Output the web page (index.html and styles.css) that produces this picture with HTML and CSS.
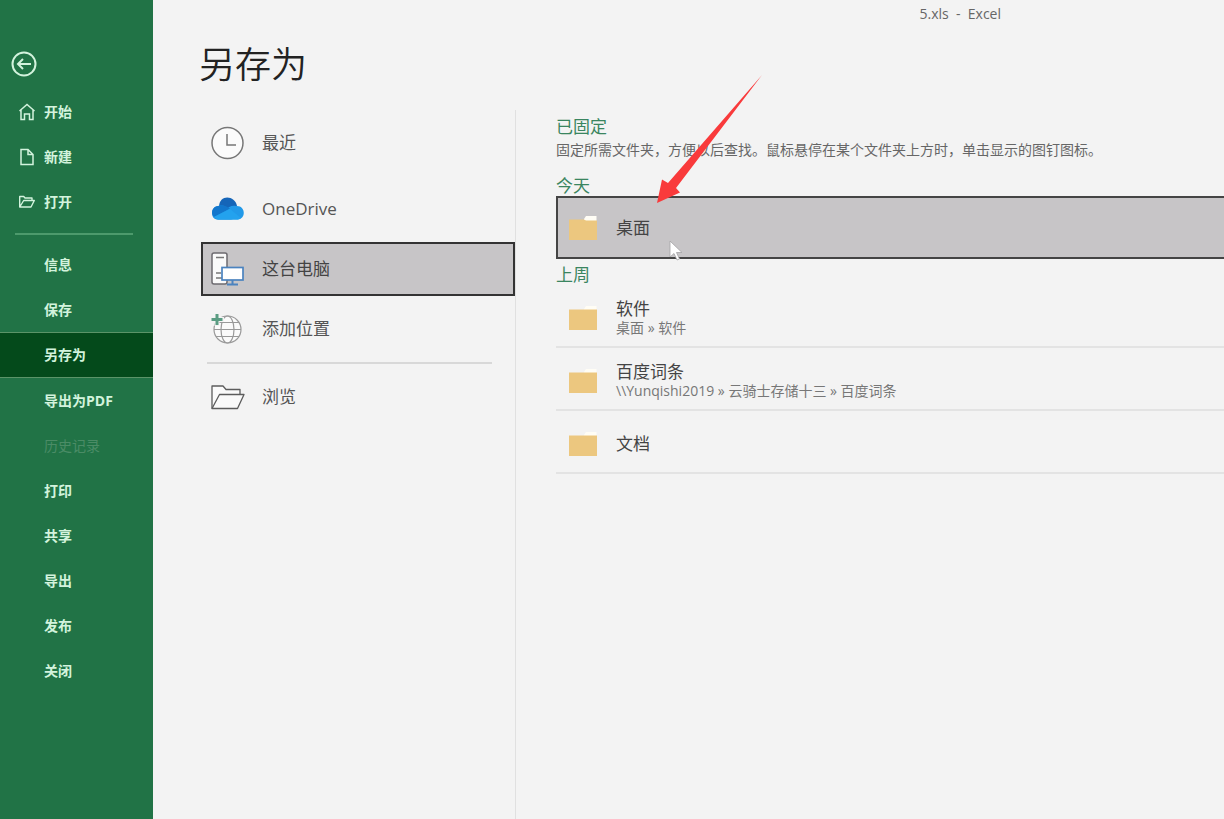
FILE: index.html
```html
<!DOCTYPE html>
<html lang="zh-CN">
<head>
<meta charset="utf-8">
<meta name="viewport" content="width=device-width, initial-scale=1">
<title>5.xls - Excel</title>
<link rel="stylesheet" href="styles.css">
</head>
<body>
<div class="app">
  <nav class="sidebar" aria-label="文件">
    <button class="back" type="button" aria-label="返回">
      <svg width="26" height="26" viewBox="0 0 26 26" fill="none" stroke="currentColor" stroke-width="2"><circle cx="13" cy="13" r="11.5"/><path d="M20 13H7M12 8l-5 5 5 5"/></svg>
    </button>
    <button class="nav-item" type="button">
      <svg class="nav-icon" width="16" height="18" viewBox="0 0 16 18" fill="none" stroke="currentColor" stroke-width="1.5"><path d="M.5 8L8 1.500 15.500 8M2 7v9.500h3.500V11h5v5.500H14V7"/></svg>开始
    </button>
    <button class="nav-item" type="button">
      <svg class="nav-icon" width="16" height="18" viewBox="0 0 16 18" fill="none" stroke="currentColor" stroke-width="1.500"><path d="M2 1.500h7l5 5v10H2zM9 1.500v5h5"/></svg>新建
    </button>
    <button class="nav-item" type="button">
      <svg class="nav-icon" width="16" height="18" viewBox="0 0 16 18" fill="none" stroke="currentColor" stroke-width="1.400" stroke-linejoin="round"><path d="M.7 14V3.500h4L6 5h7v2.500M.7 14l4-6.500h10.600l-3.300 6.500z"/></svg>打开
    </button>
    <hr class="nav-rule">
    <button class="nav-item" type="button">信息</button>
    <button class="nav-item" type="button">保存</button>
    <button class="nav-item current" type="button" aria-current="page">另存为</button>
    <button class="nav-item" type="button">导出为PDF</button>
    <button class="nav-item" type="button" disabled>历史记录</button>
    <button class="nav-item" type="button">打印</button>
    <button class="nav-item" type="button">共享</button>
    <button class="nav-item" type="button">导出</button>
    <button class="nav-item" type="button">发布</button>
    <button class="nav-item" type="button">关闭</button>
  </nav>

  <main class="main">
    <header class="titlebar">5.xls&nbsp; -&nbsp; Excel</header>
    <h1 class="page-title">另存为</h1>
    <div class="columns">
      <section class="places" aria-label="位置">
        <button class="place" type="button">
          <svg width="34" height="34" viewBox="0 0 34 34" fill="none"><circle cx="16.500" cy="17" r="15.500" fill="#fbfbfb" stroke="#777" stroke-width="1.500"/><path d="M16 8v11h9" stroke="#777" stroke-width="1.500"/></svg>最近
        </button>
        <button class="place" type="button">
          <svg width="34" height="34" viewBox="0 0 34 34"><path d="M8 15C8 2 24 3 26 14L16 22z" fill="#1565b8"/><path d="M7 27.500C-1 27-1 15 7 14c4-2 7 0 10 3l9 9-6 1.500z" fill="#1687d9"/><path d="M15 18c2-3 6-5 10-4 10-1 10 13 2 13.500H7c-3 0-5-2-5.500-4z" fill="#2199e8"/><path d="M8 14c3-2 7 0 11 2.500L3 25c-4-5-1-11 5-11z" fill="#1276cc"/><path d="M3 25l16-8 11 9-3 1.500H7z" fill="#23a2ee"/></svg>OneDrive
        </button>
        <button class="place selected" type="button" aria-pressed="true">
          <svg width="34" height="34" viewBox="0 0 34 34" fill="none"><rect x="1" y="1" width="15" height="31" rx="2" fill="#fafafa" stroke="#6d6b70" stroke-width="1.500"/><path d="M5 5.500h8M5 21h5M5 26h6" stroke="#777" stroke-width="1.500"/><rect x="11" y="15.500" width="21" height="12.500" fill="#fff" stroke="#4b83bf" stroke-width="1.700"/><path d="M21.500 28v4M16 32.500h11" stroke="#4b83bf" stroke-width="2"/></svg>这台电脑
        </button>
        <button class="place" type="button">
          <svg width="34" height="34" viewBox="0 0 34 34" fill="none"><g stroke="#999" stroke-width="1.200"><circle cx="16.500" cy="17.500" r="13.500" fill="#fafafa"/><ellipse cx="16.500" cy="17.500" rx="6.500" ry="13.500"/><path d="M5 10.500h23M3 17.500h27M5 24.500h23"/></g><path d="M6 1v13M0 7.500h13" stroke="#f3f3f3" stroke-width="5"/><path d="M6 2v11M.5 7.500h11" stroke="#5a9c82" stroke-width="3"/></svg>添加位置
        </button>
        <hr class="place-rule">
        <button class="place" type="button">
          <svg width="34" height="34" viewBox="0 0 34 34" fill="#fafafa" stroke="#5c5c5c" stroke-width="1.300" stroke-linejoin="round"><path d="M1 28.500V6h11l3 3.500h14V15"/><path d="M1 28.500L8.500 14.500H33l-6.500 14z"/></svg>浏览
        </button>
      </section>

      <section class="folders" aria-label="文件夹">
        <h2 class="group pinned">已固定</h2>
        <p class="hint">固定所需文件夹，方便以后查找。鼠标悬停在某个文件夹上方时，单击显示的图钉图标。</p>
        <h2 class="group today">今天</h2>
        <button class="folder selected" type="button" aria-pressed="true">
          <svg width="28" height="24" viewBox="0 0 28 24"><path d="M15 3l2-3h10.500v6H15z" fill="#fffdf5"/><path d="M0 3.500h15l2 1h11V24H0z" fill="#ecc77f"/></svg>
          <span class="folder-text"><span class="name">桌面</span></span>
        </button>
        <h2 class="group last-week">上周</h2>
        <button class="folder" type="button">
          <svg width="28" height="24" viewBox="0 0 28 24"><path d="M15 3l2-3h10.500v6H15z" fill="#fffdf5"/><path d="M0 3.500h28V24H0z" fill="#ecc77f"/></svg>
          <span class="folder-text"><span class="name">软件</span><span class="path">桌面 » 软件</span></span>
        </button>
        <button class="folder" type="button">
          <svg width="28" height="24" viewBox="0 0 28 24"><path d="M15 3l2-3h10.500v6H15z" fill="#fffdf5"/><path d="M0 3.500h28V24H0z" fill="#ecc77f"/></svg>
          <span class="folder-text"><span class="name">百度词条</span><span class="path">\\Yunqishi2019 » 云骑士存储十三 » 百度词条</span></span>
        </button>
        <button class="folder" type="button">
          <svg width="28" height="24" viewBox="0 0 28 24"><path d="M15 3l2-3h10.500v6H15z" fill="#fffdf5"/><path d="M0 3.500h28V24H0z" fill="#ecc77f"/></svg>
          <span class="folder-text"><span class="name">文档</span></span>
        </button>
      </section>
    </div>
  </main>

  <svg class="arrow" width="108" height="130" viewBox="0 0 108 130" aria-hidden="true"><path d="M1 128L6 104.500 12 108 106 0 20 113 24 117.500z" fill="#f93a3b"/></svg>
  <svg class="cursor" width="14" height="22" viewBox="0 0 14 22" aria-hidden="true"><path d="M1 1v16l4-3.500 3 6.500 2.500-1-3-6.500H13z" fill="#fff" stroke="#a5a3a6" stroke-width=".8"/></svg>
</div>
</body>
</html>
```
FILE: styles.css
```css
* {
  box-sizing: border-box;
}

body {
  margin: 0;
  background: #f3f3f3;
  color: #444;
  font: 14px/20px "Open Sans", "Noto Sans CJK SC", sans-serif;
}

button {
  border: 0;
  margin: 0;
  padding: 0;
  background: none;
  color: inherit;
  font: inherit;
  text-align: left;
}

svg {
  flex: none;
}

.app {
  position: relative;
  display: flex;
  min-height: 100vh;
  overflow: hidden;
}

.sidebar {
  display: flex;
  flex-direction: column;
  flex: none;
  width: 153px;
  padding-top: 51px;
  background: #217346;
  color: #d3f3dd;
}

.back {
  display: flex;
  align-self: flex-start;
  margin: 0 0 12px 11px;
}

.nav-item {
  display: flex;
  align-items: center;
  height: 45px;
  padding-left: 44px;
  font-weight: 700;
}

.nav-item:has(.nav-icon) {
  gap: 9px;
  padding-left: 19px;
}

.nav-item.current {
  height: 46px;
  border: solid #5b9468;
  border-width: 1px 0;
  background: #044a1b;
}

.nav-item:disabled {
  color: #4b8c66;
  font-weight: 400;
}

.nav-rule {
  width: 118px;
  height: 2px;
  margin: 9px 0 7px 15px;
  border: 0;
  background: #4d9a6c;
}

.main {
  display: flex;
  flex-direction: column;
  flex: 1;
  min-width: 0;
}

.titlebar {
  padding: 4px 223px 5px 0;
  color: #666;
  font-size: 14px;
  text-align: right;
}

.page-title {
  margin: 0;
  padding: 12px 0 21px 46px;
  color: #222;
  font-size: 36px;
  font-weight: 350;
  line-height: 48px;
}

.columns {
  display: flex;
  flex: 1;
}

.places {
  flex: none;
  width: 363px;
  padding-left: 48px;
  border-right: 1px solid #e0e0e0;
}

.place {
  display: flex;
  align-items: center;
  gap: 17px;
  width: 100%;
  height: 66px;
  padding-left: 10px;
  color: #555;
  font-size: 17px;
}

.place.selected {
  height: 54px;
  padding-left: 8px;
  border: 2px solid #333;
  background: #c7c5c7;
  color: #444;
}

.place-rule {
  height: 2px;
  margin: 0 23px 0 6px;
  border: 0;
  background: #d8d8d8;
}

.folders {
  flex: 1;
  min-width: 0;
  padding: 7px 0 0 40px;
}

.group {
  margin: 0;
  color: #3a8560;
  font-size: 17px;
  font-weight: 400;
  line-height: 20px;
}

.hint {
  margin: 3px 0 16px;
  color: #666;
  white-space: nowrap;
}

.last-week {
  margin-top: 6px;
}

.folder {
  display: flex;
  align-items: center;
  gap: 19px;
  width: 100%;
  height: 63px;
  padding: 4px 0 0 13px;
  border-bottom: 2px solid #e3e3e3;
}

.folder.selected {
  padding: 0 0 0 11px;
  border: 2px solid #444;
  border-right: 0;
  background: #c7c5c7;
}

.folder-text {
  display: flex;
  flex-direction: column;
}

.name {
  font-size: 17px;
}

.path {
  color: #777;
  line-height: 18px;
}

.arrow {
  position: absolute;
  left: 656px;
  top: 75px;
}

.cursor {
  position: absolute;
  left: 669px;
  top: 240px;
}
```
